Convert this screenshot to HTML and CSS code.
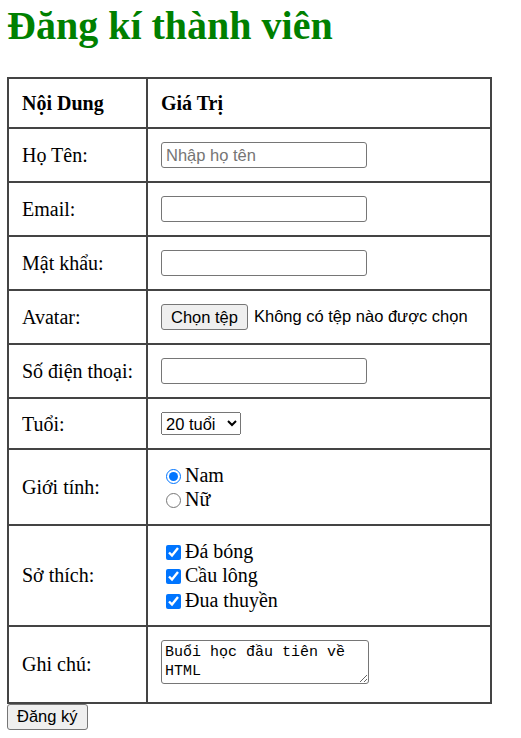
FILE: index.html
```html
<!DOCTYPE html>
<html lang="vi">
<head>
<meta charset="utf-8">
<title>Đăng kí thành viên</title>
<link rel="stylesheet" href="styles.css">
</head>
<body>
<h1 class="title">Đăng kí thành viên</h1>
<form class="form">
<table class="reg">
  <colgroup><col class="c1"><col class="c2"></colgroup>
  <tr class="head">
    <th>Nội Dung</th>
    <th>Giá Trị</th>
  </tr>
  <tr>
    <td>Họ Tên:</td>
    <td><input class="text" type="text" placeholder="Nhập họ tên"></td>
  </tr>
  <tr>
    <td>Email:</td>
    <td><input class="text" type="email"></td>
  </tr>
  <tr>
    <td>Mật khẩu:</td>
    <td><input class="text" type="password"></td>
  </tr>
  <tr>
    <td>Avatar:</td>
    <td><button type="button" class="btn">Chọn tệp</button><span class="file-name">Không có tệp nào được chọn</span></td>
  </tr>
  <tr>
    <td>Số điện thoại:</td>
    <td><input class="text" type="tel"></td>
  </tr>
  <tr>
    <td>Tuổi:</td>
    <td><select class="sel"><option>20 tuổi</option><option>21 tuổi</option></select></td>
  </tr>
  <tr>
    <td>Giới tính:</td>
    <td class="choices radios"><input class="radio" type="radio" name="gt" checked>Nam<br><input class="radio" type="radio" name="gt">Nữ</td>
  </tr>
  <tr>
    <td>Sở thích:</td>
    <td class="choices checks"><input class="check" type="checkbox" checked>Đá bóng<br><input class="check" type="checkbox" checked>Cầu lông<br><input class="check" type="checkbox" checked>Đua thuyền</td>
  </tr>
  <tr>
    <td>Ghi chú:</td>
    <td><textarea class="note">Buổi học đầu tiên về HTML</textarea></td>
  </tr>
</table>
<button type="submit" class="btn submit">Đăng ký</button>
</form>
</body>
</html>
```
FILE: styles.css
```css
html { background: #fff; }
body {
  margin: 3px 7px 8px;
  font-family: "Liberation Serif", "Times New Roman", serif;
  font-size: 20px;
  color: #000;
}
.title {
  margin: 0 0 28px;
  font-size: 40px;
  font-weight: bold;
  color: #008000;
  line-height: 46px;
}
.form { margin: 0; }
.reg {
  border-collapse: collapse;
  table-layout: fixed;
  width: 485px;
}
.c1 { width: 139px; }
.reg th, .reg td {
  border: 2px solid #444;
  padding: 13px;
  text-align: left;
  vertical-align: middle;
  white-space: nowrap;
}
.reg td { line-height: 22px; }
.reg .head th { padding-top: 12px; padding-bottom: 12px; line-height: 24px; }
.text {
  box-sizing: border-box;
  width: 206px;
  height: 26px;
  margin: 0;
  padding: 1px 4px;
  font-family: "Liberation Sans", Arial, sans-serif;
  font-size: 16.5px;
  border: 1px solid #767676;
  border-radius: 3px;
  vertical-align: top;
}
.text::placeholder { color: #757575; }
.btn {
  box-sizing: border-box;
  height: 26px;
  margin: 0;
  padding: 1px 9px;
  font-family: "Liberation Sans", Arial, sans-serif;
  font-size: 16.5px;
  color: #000;
  background: #efefef;
  border: 1px solid #767676;
  border-radius: 3px;
  vertical-align: top;
}
.file-name {
  font-family: "Liberation Sans", Arial, sans-serif;
  font-size: 16.5px;
  margin-left: 6px;
}
.sel {
  width: 80px;
  font-family: "Liberation Sans", Arial, sans-serif;
  font-size: 16.5px;
  height: 23px;
  margin: 0;
  color: #000;
  vertical-align: top;
}
.reg .radios { line-height: 24px; }
.reg .checks { line-height: 24.33px; }
.radio, .check {
  width: 15px;
  height: 15px;
  margin: 3px 4px 3px 5px;
  vertical-align: -2px;
}
.note {
  box-sizing: border-box;
  width: 208px;
  height: 44px;
  margin: 0 0 5px;
  padding: 2px 3px;
  font-family: "Liberation Mono", "DejaVu Sans Mono", monospace;
  font-size: 15px;
  line-height: 19px;
  border: 1px solid #767676;
  border-radius: 3px;
  vertical-align: top;
}
.submit { display: block; height: 26px; padding: 1px 9px; }
```
